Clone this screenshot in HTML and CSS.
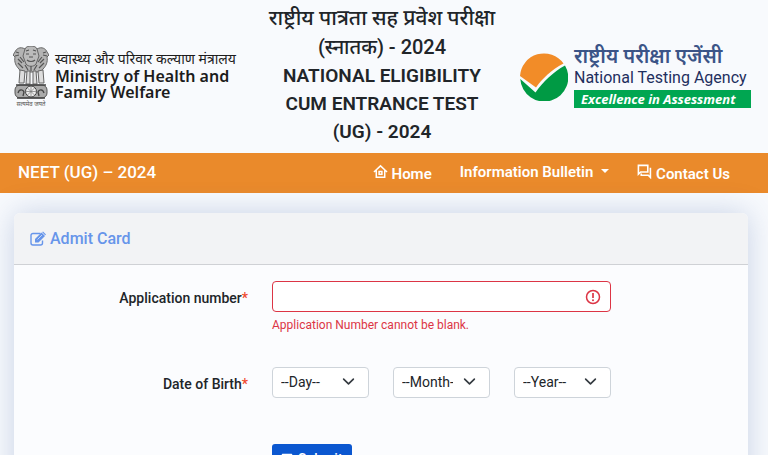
FILE: index.html
```html
<!DOCTYPE html>
<html lang="en">
<head>
    <meta charset="UTF-8">
    <meta name="viewport" content="width=device-width, initial-scale=1.0">
    <title>Admit Card - NEET (UG) 2024</title>
    <link rel="stylesheet" href="styles.css">
</head>
<body>
    <header class="top-header">
        <div class="ministry">
            <div class="emblem-box">
                <svg class="emblem" viewBox="0 0 36 54" aria-hidden="true">
                    <g fill="#b4b4b4" stroke="#666" stroke-width="1">
                        <path d="M12 3c-5-3-9 0-10 3l-2 3 2 2c-1 5 1 9 4 12l2 3h20l2-3c3-3 5-7 4-12l2-2-2-3c-1-3-5-6-10-3z"/>
                        <path d="M7 24l-1 13h5l1-12zM14 25l-1 13h4V25zM20 25v13h4l-1-13zM25 25l1 12h5l-1-13z" fill="#ddd"/>
                        <path d="M12 3c1-4 11-4 12 0l2 7-3 8c-2 3-8 3-10 0l-3-8z" fill="#bbb"/>
                    </g>
                    <path d="M13 5l3-1M20 4l3 1M13 8h3M20 8h3M16 11h4M14 14c2 2 6 2 8 0M3 6l3 1M2 10l4-1M5 13l4 4M7 11l4 5M5 17l5 5M33 6l-3 1M34 10l-4-1M31 13l-4 4M29 11l-4 5M31 17l-5 5M12 19l3 5M18 20v5M24 19l-3 5" fill="none" stroke="#555" stroke-width="1.2"/>
                    <rect x="2" y="39" width="32" height="13" rx="5" fill="#aaa" stroke="#555"/>
                    <path d="M3 39h30M4 52h28" stroke="#444" stroke-width="1.5"/>
                    <circle cx="18" cy="45.5" r="5.5" fill="#eee" stroke="#444"/>
                    <path d="M13 45.5h10M18 40.5v10M14.5 42l7 7M21.5 42l-7 7" stroke="#777" stroke-width=".7"/>
                    <path d="M5 47c1-4 5-4 6-1l-1 4M31 47c-1-4-5-4-6-1l1 4" fill="none" stroke="#444" stroke-width="1.3"/>
                </svg>
                <div class="motto" lang="hi">सत्यमेव जयते</div>
            </div>
            <div class="ministry-name">
                <div class="ministry-hi" lang="hi">स्वास्थ्य और परिवार कल्याण मंत्रालय</div>
                <div class="ministry-en">Ministry of Health and</div>
                <div class="ministry-en">Family Welfare</div>
            </div>
        </div>
        <h1 class="exam-title">
            <span class="title-hi" lang="hi">राष्ट्रीय पात्रता सह प्रवेश परीक्षा</span>
            <span class="title-hi" lang="hi">(स्नातक) - 2024</span>
            NATIONAL ELIGIBILITY<br>CUM ENTRANCE TEST<br>(UG) - 2024
        </h1>
        <div class="nta">
            <svg class="nta-mark" viewBox="0 0 48 48" aria-hidden="true">
                <path d="M0 23A24 24 0 0 1 43.5 10.5C31 17 22 26 16 34.5z" fill="#f28c28"/>
                <path d="M.3 26L15.5 39.5C23 29 33 19 45 12.5A24 24 0 1 1 .3 26z" fill="#009a44"/>
            </svg>
            <div class="nta-name">
                <div class="nta-hi" lang="hi">राष्ट्रीय परीक्षा एजेंसी</div>
                <div class="nta-en">National Testing Agency</div>
                <div class="nta-tag">Excellence in Assessment</div>
            </div>
        </div>
    </header>

    <nav class="navbar">
        <a class="brand" href="#">NEET (UG) – 2024</a>
        <ul class="menu">
            <li><a class="icon-link" href="#">
                <svg class="nav-icon" viewBox="0 0 16 16" fill="none" stroke="currentColor" stroke-width="1.6" aria-hidden="true">
                    <path d="M1 8.5L8 2l7 6.5M3.5 7v7h9V7"/>
                    <rect x="6.5" y="8" width="3" height="3"/>
                </svg>
                Home</a></li>
            <li><button class="dropdown" type="button">Information Bulletin</button></li>
            <li><a class="icon-link" href="#">
                <svg class="nav-icon" viewBox="0 0 16 16" fill="none" stroke="currentColor" stroke-width="1.7" aria-hidden="true">
                    <path d="M1.5 1.5h10v7H4l-2.5 2.3z"/>
                    <path d="M14.3 4v10.3L12 12H4.5v-1.8"/>
                </svg>
                Contact Us</a></li>
        </ul>
    </nav>

    <main class="page">
        <section class="card">
            <h2 class="card-header">
                <svg class="edit-icon" viewBox="0 0 16 16" fill="none" stroke="currentColor" aria-hidden="true">
                    <path d="M10.5 2.5H3a2 2 0 0 0-2 2V12a2 2 0 0 0 2 2h7.5a2 2 0 0 0 2-2V9.5" stroke-width="1.4"/>
                    <path d="M5 11.500V8l6.500-6.500 3.500 3.500-6.500 6.500z" fill="currentColor" stroke="none"/>
                    <path d="M12.200 1.300l.8-.8 3 3-.8.8z" fill="currentColor" stroke="none"/>
                    <path d="M7.5 8.5l4.5-4.5" stroke="#f2f3f5" stroke-width=".7"/>
                </svg>
                Admit Card
            </h2>
            <form class="card-body">
                <div class="form-row">
                    <label for="appno">Application number<span class="req">*</span></label>
                    <div class="field">
                        <div class="input-wrap">
                            <input type="text" id="appno" class="control invalid" aria-describedby="appno-error" autocomplete="off">
                            <svg class="error-icon" viewBox="0 0 16 16" fill="none" stroke="currentColor" aria-hidden="true">
                                <circle cx="8" cy="8" r="6.5" stroke-width="1.5"/>
                                <path d="M8 4v5" stroke-width="1.7"/>
                                <circle cx="8" cy="11.2" r="1" fill="currentColor" stroke="none"/>
                            </svg>
                        </div>
                        <div class="error" id="appno-error">Application Number cannot be blank.</div>
                    </div>
                </div>
                <div class="form-row">
                    <label for="day">Date of Birth<span class="req">*</span></label>
                    <div class="field dob">
                        <div class="select-wrap">
                            <select id="day" class="control"><option>--Day--</option></select>
                            <svg viewBox="0 0 16 16" aria-hidden="true"><path d="M2 5l6 6 6-6"/></svg>
                        </div>
                        <div class="select-wrap">
                            <select class="control" aria-label="Month"><option>--Month--</option></select>
                            <svg viewBox="0 0 16 16" aria-hidden="true"><path d="M2 5l6 6 6-6"/></svg>
                        </div>
                        <div class="select-wrap">
                            <select class="control" aria-label="Year"><option>--Year--</option></select>
                            <svg viewBox="0 0 16 16" aria-hidden="true"><path d="M2 5l6 6 6-6"/></svg>
                        </div>
                    </div>
                </div>
                <div class="form-row">
                    <div class="field submit-field">
                        <button type="submit" class="btn">
                            <svg viewBox="0 0 16 16" aria-hidden="true"><path d="M2 1h12a1 1 0 0 1 1 1v12H1V2a1 1 0 0 1 1-1zm2 3v4h8V4z" fill="currentColor" fill-rule="evenodd"/></svg>
                            Submit
                        </button>
                    </div>
                </div>
            </form>
        </section>
    </main>
</body>
</html>
```
FILE: styles.css
```css
:root {
    --orange: #ea8a2b;
    --red: #dc3545;
    --blue: #0b57d0;
    --text: #212529;
}
* { box-sizing: border-box; margin: 0; padding: 0; }
body {
    font-family: Roboto, "Noto Sans", sans-serif;
    font-size: 14px;
    color: var(--text);
    background: #f8fafd;
}
.top-header {
    display: grid;
    grid-template-columns: 1fr 1fr 1fr;
    align-items: center;
    padding: 4px 17px 4px 13px;
}
.ministry {
    display: flex;
    gap: 6px;
    color: #1c1c1c;
    white-space: nowrap;
}
.emblem-box { width: 36px; }
.emblem {
    display: block;
    width: 36px;
    height: 54px;
}
.ministry-name {
    font-family: "Noto Sans", "Open Sans", sans-serif;
    padding-top: 4px;
}
.ministry-hi {
    font-size: 14px;
    line-height: 18px;
}
.ministry-en {
    font-size: 16px;
    font-weight: 600;
    line-height: 16px;
}
.motto {
    font-size: 6px;
    line-height: 8px;
    text-align: center;
    color: #555;
}
.exam-title {
    padding-bottom: 3px;
    font-size: 19px;
    font-weight: 600;
    line-height: 28px;
    text-align: center;
    white-space: nowrap;
}
.title-hi {
    display: block;
    font-size: 21px;
    font-weight: 500;
    line-height: 29px;
}
.title-hi + .title-hi { font-size: 20px; }
.nta {
    display: flex;
    align-items: center;
    justify-content: flex-end;
    gap: 6px;
    white-space: nowrap;
}
.nta-mark {
    width: 48px;
    height: 48px;
}
.nta-name { width: 177px; }
.nta-hi {
    font-size: 20px;
    font-weight: 600;
    line-height: 20px;
    color: #3b5487;
}
.nta-en {
    font-size: 16px;
    line-height: 24px;
    color: #1f2f5e;
}
.nta-tag {
    font-family: "Open Sans", sans-serif;
    font-size: 13px;
    font-weight: 700;
    font-style: italic;
    line-height: 18px;
    padding-left: 7px;
    color: #fff;
    background: #00a651;
}
.navbar {
    display: flex;
    align-items: center;
    justify-content: space-between;
    height: 40px;
    padding: 0 38px 2px 18px;
    background: var(--orange);
}
.navbar a, .dropdown {
    color: #fff;
    font-family: inherit;
    font-size: 15px;
    font-weight: 600;
    line-height: 24px;
    text-decoration: none;
    background: none;
    border: none;
}
.navbar .brand {
    font-size: 17px;
    font-weight: 500;
}
.menu {
    display: flex;
    align-items: center;
    gap: 28px;
    list-style: none;
}
.icon-link {
    display: block;
    padding-top: 4px;
}
.nav-icon {
    width: 15px;
    height: 15px;
}
.dropdown::after {
    content: "";
    display: inline-block;
    margin-left: 8px;
    vertical-align: 4px;
    border-top: 4px solid;
    border-right: 4px solid transparent;
    border-left: 4px solid transparent;
}
.page { padding: 20px 20px 20px 14px; }
.card {
    background: #fbfcfe;
    border-radius: 6px;
    box-shadow: 0 0 30px rgba(60, 90, 160, 0.25);
}
.card-header {
    display: flex;
    align-items: center;
    gap: 4px;
    padding: 14px 16px 13px;
    font-size: 16px;
    font-weight: 500;
    line-height: 24px;
    color: #6795ea;
    background: #f2f3f5;
    border-bottom: 1px solid #cfd1d5;
    border-radius: 6px 6px 0 0;
}
.edit-icon {
    width: 16px;
    height: 16px;
}
.card-body {
    padding: 16px 4px;
    display: flex;
    flex-direction: column;
    gap: 33px;
}
.form-row {
    display: grid;
    grid-template-columns: 4fr 6fr 2fr;
    align-items: start;
}
.form-row label {
    padding-right: 12px;
    font-weight: 500;
    line-height: 34px;
    text-align: right;
}
.req { color: #f0492e; }
.field { padding: 0 12px; }
.input-wrap, .select-wrap { position: relative; }
.control {
    display: block;
    width: 100%;
    height: 31px;
    padding: 3px 8px 5px;
    font-family: inherit;
    font-size: 14px;
    color: var(--text);
    background: #fff;
    border: 1px solid #ced4da;
    border-radius: 4px;
    appearance: none;
    outline: none;
}
select.control { padding-right: 36px; }
.control.invalid {
    padding-right: 36px;
    border-color: var(--red);
}
.error-icon {
    position: absolute;
    top: 8px;
    right: 10px;
    width: 16px;
    height: 16px;
    color: var(--red);
}
.error {
    padding-top: 4px;
    font-size: 12px;
    line-height: 18px;
    color: var(--red);
}
.dob {
    display: flex;
    gap: 24px;
}
.select-wrap { flex: 1; }
.select-wrap svg {
    position: absolute;
    top: 8px;
    right: 14px;
    width: 13px;
    height: 13px;
    fill: none;
    stroke: #343a40;
    stroke-width: 2;
    stroke-linecap: round;
    stroke-linejoin: round;
    pointer-events: none;
}
.submit-field {
    grid-column: 2;
    padding-top: 10px;
}
.btn {
    display: flex;
    align-items: center;
    gap: 5px;
    padding: 4px 9px;
    font-family: inherit;
    font-size: 14px;
    font-weight: 500;
    line-height: 22px;
    color: #fff;
    background: var(--blue);
    border: none;
    border-radius: 3px;
    cursor: pointer;
}
.btn svg {
    width: 12px;
    height: 12px;
}
@media (max-width: 600px) {
    .top-header { grid-template-columns: 1fr; justify-items: center; gap: 10px; }
    .navbar { height: auto; flex-wrap: wrap; }
    .form-row { grid-template-columns: 1fr; }
    .form-row label { padding-left: 12px; text-align: left; }
    .submit-field { grid-column: 1; }
}
```
